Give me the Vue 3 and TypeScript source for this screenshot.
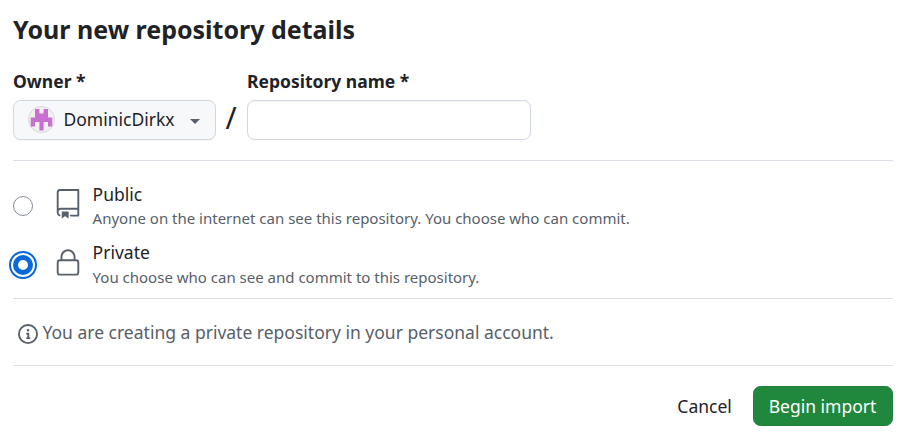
<script setup lang="ts">
import { ref } from 'vue'

interface VisibilityOption {
  id: string
  title: string
  description: string
  icon: string
}

const options: VisibilityOption[] = [
  {
    id: 'public',
    title: 'Public',
    description: 'Anyone on the internet can see this repository. You choose who can commit.',
    icon: 'M3 2.75A2.75 2.75 0 0 1 5.75 0h14.5a.75.75 0 0 1 .75.75v20.5a.75.75 0 0 1-.75.75h-6a.75.75 0 0 1 0-1.5h5.25v-4H6A1.5 1.5 0 0 0 4.5 18v.75c0 .716.43 1.334 1.05 1.605a.75.75 0 0 1-.6 1.374A3.251 3.251 0 0 1 3 18.75ZM19.5 1.5H5.75c-.69 0-1.25.56-1.25 1.25v12.651A2.989 2.989 0 0 1 6 15h13.5ZM7 18.25a.25.25 0 0 1 .25-.25h5a.25.25 0 0 1 .25.25v5.01a.25.25 0 0 1-.397.201l-2.206-1.604a.25.25 0 0 0-.294 0L7.397 23.46a.25.25 0 0 1-.397-.2v-5.01Z',
  },
  {
    id: 'private',
    title: 'Private',
    description: 'You choose who can see and commit to this repository.',
    icon: 'M6 9V7.25C6 3.845 8.503 1 12 1s6 2.845 6 6.25V9h.5a2.5 2.5 0 0 1 2.5 2.5v8a2.5 2.5 0 0 1-2.5 2.5h-13A2.5 2.5 0 0 1 3 19.5v-8A2.5 2.5 0 0 1 5.5 9Zm-1.5 2.5v8a1 1 0 0 0 1 1h13a1 1 0 0 0 1-1v-8a1 1 0 0 0-1-1h-13a1 1 0 0 0-1 1Zm3-4.25V9h9V7.25c0-2.67-1.922-4.75-4.5-4.75-2.578 0-4.5 2.08-4.5 4.75Z',
  },
]

const owner = 'DominicDirkx'
const repositoryName = ref('')
const visibility = ref('private')
</script>

<template>
  <form class="page" @submit.prevent>
    <h2 class="heading">Your new repository details</h2>

    <div class="fields">
      <div class="field">
        <span class="label">Owner *</span>
        <button type="button" class="owner">
          <svg class="avatar" viewBox="0 0 27 27" aria-hidden="true">
            <circle cx="13.5" cy="13.5" r="13" fill="#f0f0f0" stroke="#d5d8db" />
            <path
              fill="#c96fd0"
              d="M7 3h4.4v4.4h4.2V3H20v8.6h4.3v8.8H20V16h-4.4v8.5h-4.2V16H7v4.4H2.7v-8.8H7Z"
            />
          </svg>
          <span class="owner-name">{{ owner }}</span>
          <span class="caret"></span>
        </button>
      </div>
      <span class="slash">/</span>
      <div class="field">
        <label class="label" for="repository-name">Repository name *</label>
        <input id="repository-name" v-model="repositoryName" class="name-input" type="text" />
      </div>
    </div>

    <div class="options">
      <label v-for="option in options" :key="option.id" class="option">
        <input v-model="visibility" class="radio" type="radio" name="visibility" :value="option.id" />
        <svg class="option-icon" viewBox="0 0 24 24" aria-hidden="true"><path :d="option.icon" /></svg>
        <span class="option-text">
          <span class="option-title">{{ option.title }}</span>
          <span class="option-description">{{ option.description }}</span>
        </span>
      </label>
    </div>

    <div class="notice">
      <svg class="notice-icon" viewBox="0 0 16 16" aria-hidden="true">
        <path
          d="M0 8a8 8 0 1 1 16 0A8 8 0 0 1 0 8Zm8-6.5a6.5 6.5 0 1 0 0 13 6.5 6.5 0 0 0 0-13ZM6.5 7.75A.75.75 0 0 1 7.25 7h1a.75.75 0 0 1 .75.75v2.75h.25a.75.75 0 0 1 0 1.5h-2a.75.75 0 0 1 0-1.5h.25v-2h-.25a.75.75 0 0 1-.75-.75ZM8 6a1 1 0 1 1 0-2 1 1 0 0 1 0 2Z"
        />
      </svg>
      <span>You are creating a {{ visibility }} repository in your personal account.</span>
    </div>

    <div class="actions">
      <button type="button" class="cancel">Cancel</button>
      <button type="submit" class="submit">Begin import</button>
    </div>
  </form>
</template>

<style>
body {
  background: #fff;
}
</style>

<style scoped>
.page,
.page * {
  box-sizing: border-box;
}
.page {
  height: 442px;
  padding: 10px 23px 0 13px;
  overflow: hidden;
  color: #1f2328;
  font-family: 'Noto Sans', sans-serif;
  font-size: 17.5px;
  line-height: 26px;
}
button,
input {
  margin: 0;
  font: inherit;
  color: inherit;
}
.heading {
  margin: 0 0 20px;
  font-size: 25px;
  font-weight: 700;
  line-height: 38px;
}
.fields {
  display: flex;
  align-items: flex-end;
  height: 93px;
  padding-bottom: 20px;
  border-bottom: 1px solid #d8dee4;
}
.field {
  display: flex;
  flex-direction: column;
}
.label {
  height: 32px;
  font-weight: 700;
}
.owner {
  display: flex;
  align-items: center;
  width: 203px;
  height: 40px;
  padding: 0 15px 1px 14px;
  background: #f6f8fa;
  border: 1px solid #d0d7de;
  border-radius: 7.5px;
  box-shadow: 0 1px 0 rgba(31, 35, 40, 0.04);
}
.avatar {
  width: 27px;
  height: 27px;
}
.owner-name {
  margin: 0 0 1px 8.5px;
}
.caret {
  margin: 4px 0 0 auto;
  border: 5px solid transparent;
  border-top-color: #57606a;
  border-bottom: 0;
}
.slash {
  width: 31px;
  height: 40px;
  padding-right: 1px;
  font-size: 30px;
  line-height: 36px;
  text-align: center;
}
.name-input {
  width: 284px;
  height: 40px;
  padding: 0 15px;
  background: #fff;
  border: 1px solid #d0d7de;
  border-radius: 7.5px;
  box-shadow: inset 0 1px 0 rgba(208, 215, 222, 0.2);
  outline: none;
}
.options {
  height: 138px;
  padding-top: 20px;
  border-bottom: 1px solid #d8dee4;
}
.option {
  display: flex;
  align-items: flex-start;
  height: 58.5px;
}
.radio {
  appearance: none;
  flex: none;
  width: 20px;
  height: 20px;
  margin-top: 15px;
  background: #fff;
  border: 1px solid #868e99;
  border-radius: 50%;
}
.radio:checked {
  border: 5.5px solid #0969da;
  outline: 2px solid #0969da;
  outline-offset: 2px;
}
.option-icon {
  flex: none;
  width: 30px;
  height: 30px;
  margin: 8px 0 0 20px;
  fill: #57606a;
}
.option-text {
  display: flex;
  flex-direction: column;
  margin-left: 9.6px;
}
.option-title {
  height: 26px;
}
.option + .option .option-title {
  line-height: 25.4px;
}
.option-description {
  color: #57606a;
  font-size: 15px;
  line-height: 22px;
}
.notice {
  display: flex;
  align-items: center;
  height: 67px;
  padding-left: 5px;
  color: #57606a;
  border-bottom: 1px solid #dfe1e4;
}
.notice-icon {
  width: 20px;
  height: 20px;
  margin: 3px 4.5px 0 0;
  fill: #57606a;
}
.actions {
  display: flex;
  justify-content: flex-end;
  padding-top: 20px;
}
.cancel {
  height: 40px;
  padding: 0 21.2px;
  background: none;
  border: 0;
}
.submit {
  width: 140px;
  height: 40px;
  padding: 0 1px 0 0;
  color: #fff;
  background: #1f883d;
  border: 1px solid #1f7f3a;
  border-radius: 7.5px;
}
</style>
